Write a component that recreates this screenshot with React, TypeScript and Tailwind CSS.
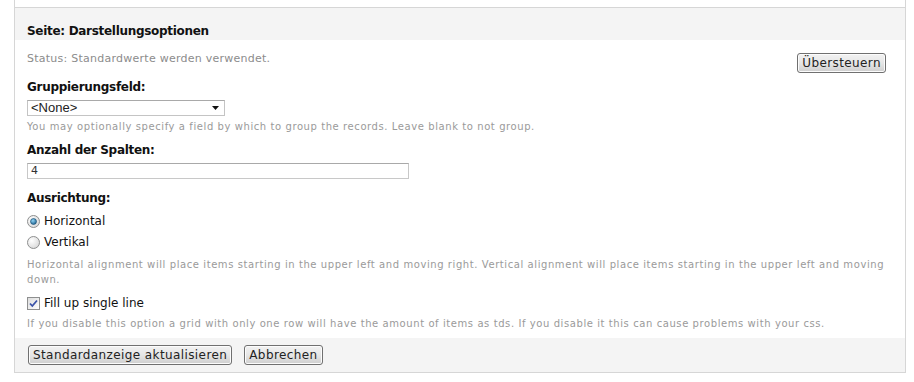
import React from "react";

const font = { fontFamily: '"DejaVu Sans", Verdana, sans-serif' };

function LegacyButton({ children }: { children: React.ReactNode }) {
    return (
        <button
            type="button"
            className="h-[20px] px-[4px] rounded-[3px] border border-[#707070] bg-gradient-to-b from-[#f2f2f2] via-[#e6e6e6] to-[#cfcfcf] text-[12px] leading-[18px] tracking-[0.4px] text-[#222] shadow-[inset_0_0_0_1px_#fcfcfc]"
        >
            {children}
        </button>
    );
}

function Radio({ checked }: { checked?: boolean }) {
    return (
        <svg width="13" height="13" viewBox="0 0 13 13" className="shrink-0">
            <defs>
                <radialGradient id={checked ? "rOn" : "rOff"} cx="0.35" cy="0.35" r="0.8">
                    <stop offset="0" stopColor="#ffffff" />
                    <stop offset="1" stopColor="#d4d4d4" />
                </radialGradient>
                <radialGradient id="dot" cx="0.4" cy="0.35" r="0.7">
                    <stop offset="0" stopColor="#8fd3f5" />
                    <stop offset="1" stopColor="#1a5f8c" />
                </radialGradient>
            </defs>
            <circle cx="6.5" cy="6.5" r="6" fill={`url(#${checked ? "rOn" : "rOff"})`} stroke="#8e8f8f" strokeWidth="1" />
            {checked && <circle cx="6.5" cy="6.5" r="3" fill="url(#dot)" stroke="#174c70" strokeWidth="0.6" />}
        </svg>
    );
}

function Checkbox() {
    return (
        <svg width="13" height="13" viewBox="0 0 13 13" className="shrink-0">
            <defs>
                <linearGradient id="cb" x1="0" y1="0" x2="1" y2="1">
                    <stop offset="0" stopColor="#dcdcdc" />
                    <stop offset="1" stopColor="#ffffff" />
                </linearGradient>
            </defs>
            <rect x="0.5" y="0.5" width="12" height="12" fill="url(#cb)" stroke="#8e8f8f" />
            <path d="M3 6.5 L5.3 9 L10 3.5" fill="none" stroke="#3a52a8" strokeWidth="1.8" />
        </svg>
    );
}

export default function App() {
    return (
        <div className="w-[914px] h-[382px] bg-white overflow-hidden" style={font}>
            <div className="ml-[14px] w-[892px] border-x border-[#d6d6d6]">
                <div className="h-[7px]" />
                <div className="border-t border-[#d6d6d6]">
                    {/* header */}
                    <div className="bg-[#f4f4f4] h-[32px] pl-[12px] pt-[16px]">
                        <h2 className="text-[12px] leading-[15px] font-bold tracking-[-0.3px] text-[#111]">Seite: Darstellungsoptionen</h2>
                    </div>

                    {/* body */}
                    <div className="px-[12px] pt-[10px]">
                        <div className="flex justify-between items-start">
                            <p className="mt-[2px] text-[11px] leading-[14px] tracking-[0.25px] text-[#8c8c8c]">Status: Standardwerte werden verwendet.</p>
                            <div className="mr-[7px]">
                                <LegacyButton>Übersteuern</LegacyButton>
                            </div>
                        </div>

                        <label className="block mt-[6px] text-[12px] leading-[15px] font-bold tracking-[-0.3px] text-[#111]">Gruppierungsfeld:</label>
                        <div className="mt-[5px] w-[198px] h-[16px] border border-[#c4c4c4] border-t-[#a9a9a9] bg-white flex items-center justify-between pl-[3px] pr-[5px]">
                            <span className="text-[13px] leading-[14px] text-[#222]" style={{ fontFamily: '"Liberation Sans", Arial, sans-serif' }}>&lt;None&gt;</span>
                            <svg width="7" height="4" viewBox="0 0 7 4"><path d="M0 0 H7 L3.5 4 Z" fill="#111" /></svg>
                        </div>
                        <p className="mt-[4px] text-[10px] leading-[13px] tracking-[0.58px] text-[#9a9a9a]">You may optionally specify a field by which to group the records. Leave blank to not group.</p>

                        <label className="block mt-[10px] text-[12px] leading-[15px] font-bold tracking-[-0.3px] text-[#111]">Anzahl der Spalten:</label>
                        <div className="mt-[5px] w-[382px] h-[16px] border border-[#c8c8c8] border-t-[#a9a9a9] bg-white pl-[3px] text-[11px] leading-[14px] text-[#333]">4</div>

                        <label className="block mt-[12px] text-[12px] leading-[15px] font-bold tracking-[-0.3px] text-[#111]">Ausrichtung:</label>
                        <div className="mt-[6px] flex items-center gap-[4px] h-[18px]">
                            <Radio checked />
                            <span className="text-[12px] leading-[15px] text-[#111]">Horizontal</span>
                        </div>
                        <div className="mt-[3px] flex items-center gap-[4px] h-[18px]">
                            <Radio />
                            <span className="text-[12px] leading-[15px] text-[#111]">Vertikal</span>
                        </div>
                        <p className="mt-[6px] text-[10px] leading-[15px] tracking-[0.58px] text-[#9a9a9a] pr-[2px]">
                            Horizontal alignment will place items starting in the upper left and moving right. Vertical alignment will place items starting in the upper left and moving down.
                        </p>

                        <div className="mt-[7px] flex items-center gap-[4px] h-[18px]">
                            <Checkbox />
                            <span className="text-[12px] leading-[15px] text-[#111]">Fill up single line</span>
                        </div>
                        <p className="mt-[5px] pb-[8px] text-[10px] leading-[13px] tracking-[0.58px] text-[#9a9a9a]">
                            If you disable this option a grid with only one row will have the amount of items as tds. If you disable it this can cause problems with your css.
                        </p>
                    </div>

                    {/* footer */}
                    <div className="bg-[#f4f4f4] border-b border-[#d6d6d6] pl-[13px] pt-[7px] pb-[7px] flex gap-[12px]">
                        <LegacyButton>Standardanzeige aktualisieren</LegacyButton>
                        <LegacyButton>Abbrechen</LegacyButton>
                    </div>
                </div>
            </div>
        </div>
    );
}
